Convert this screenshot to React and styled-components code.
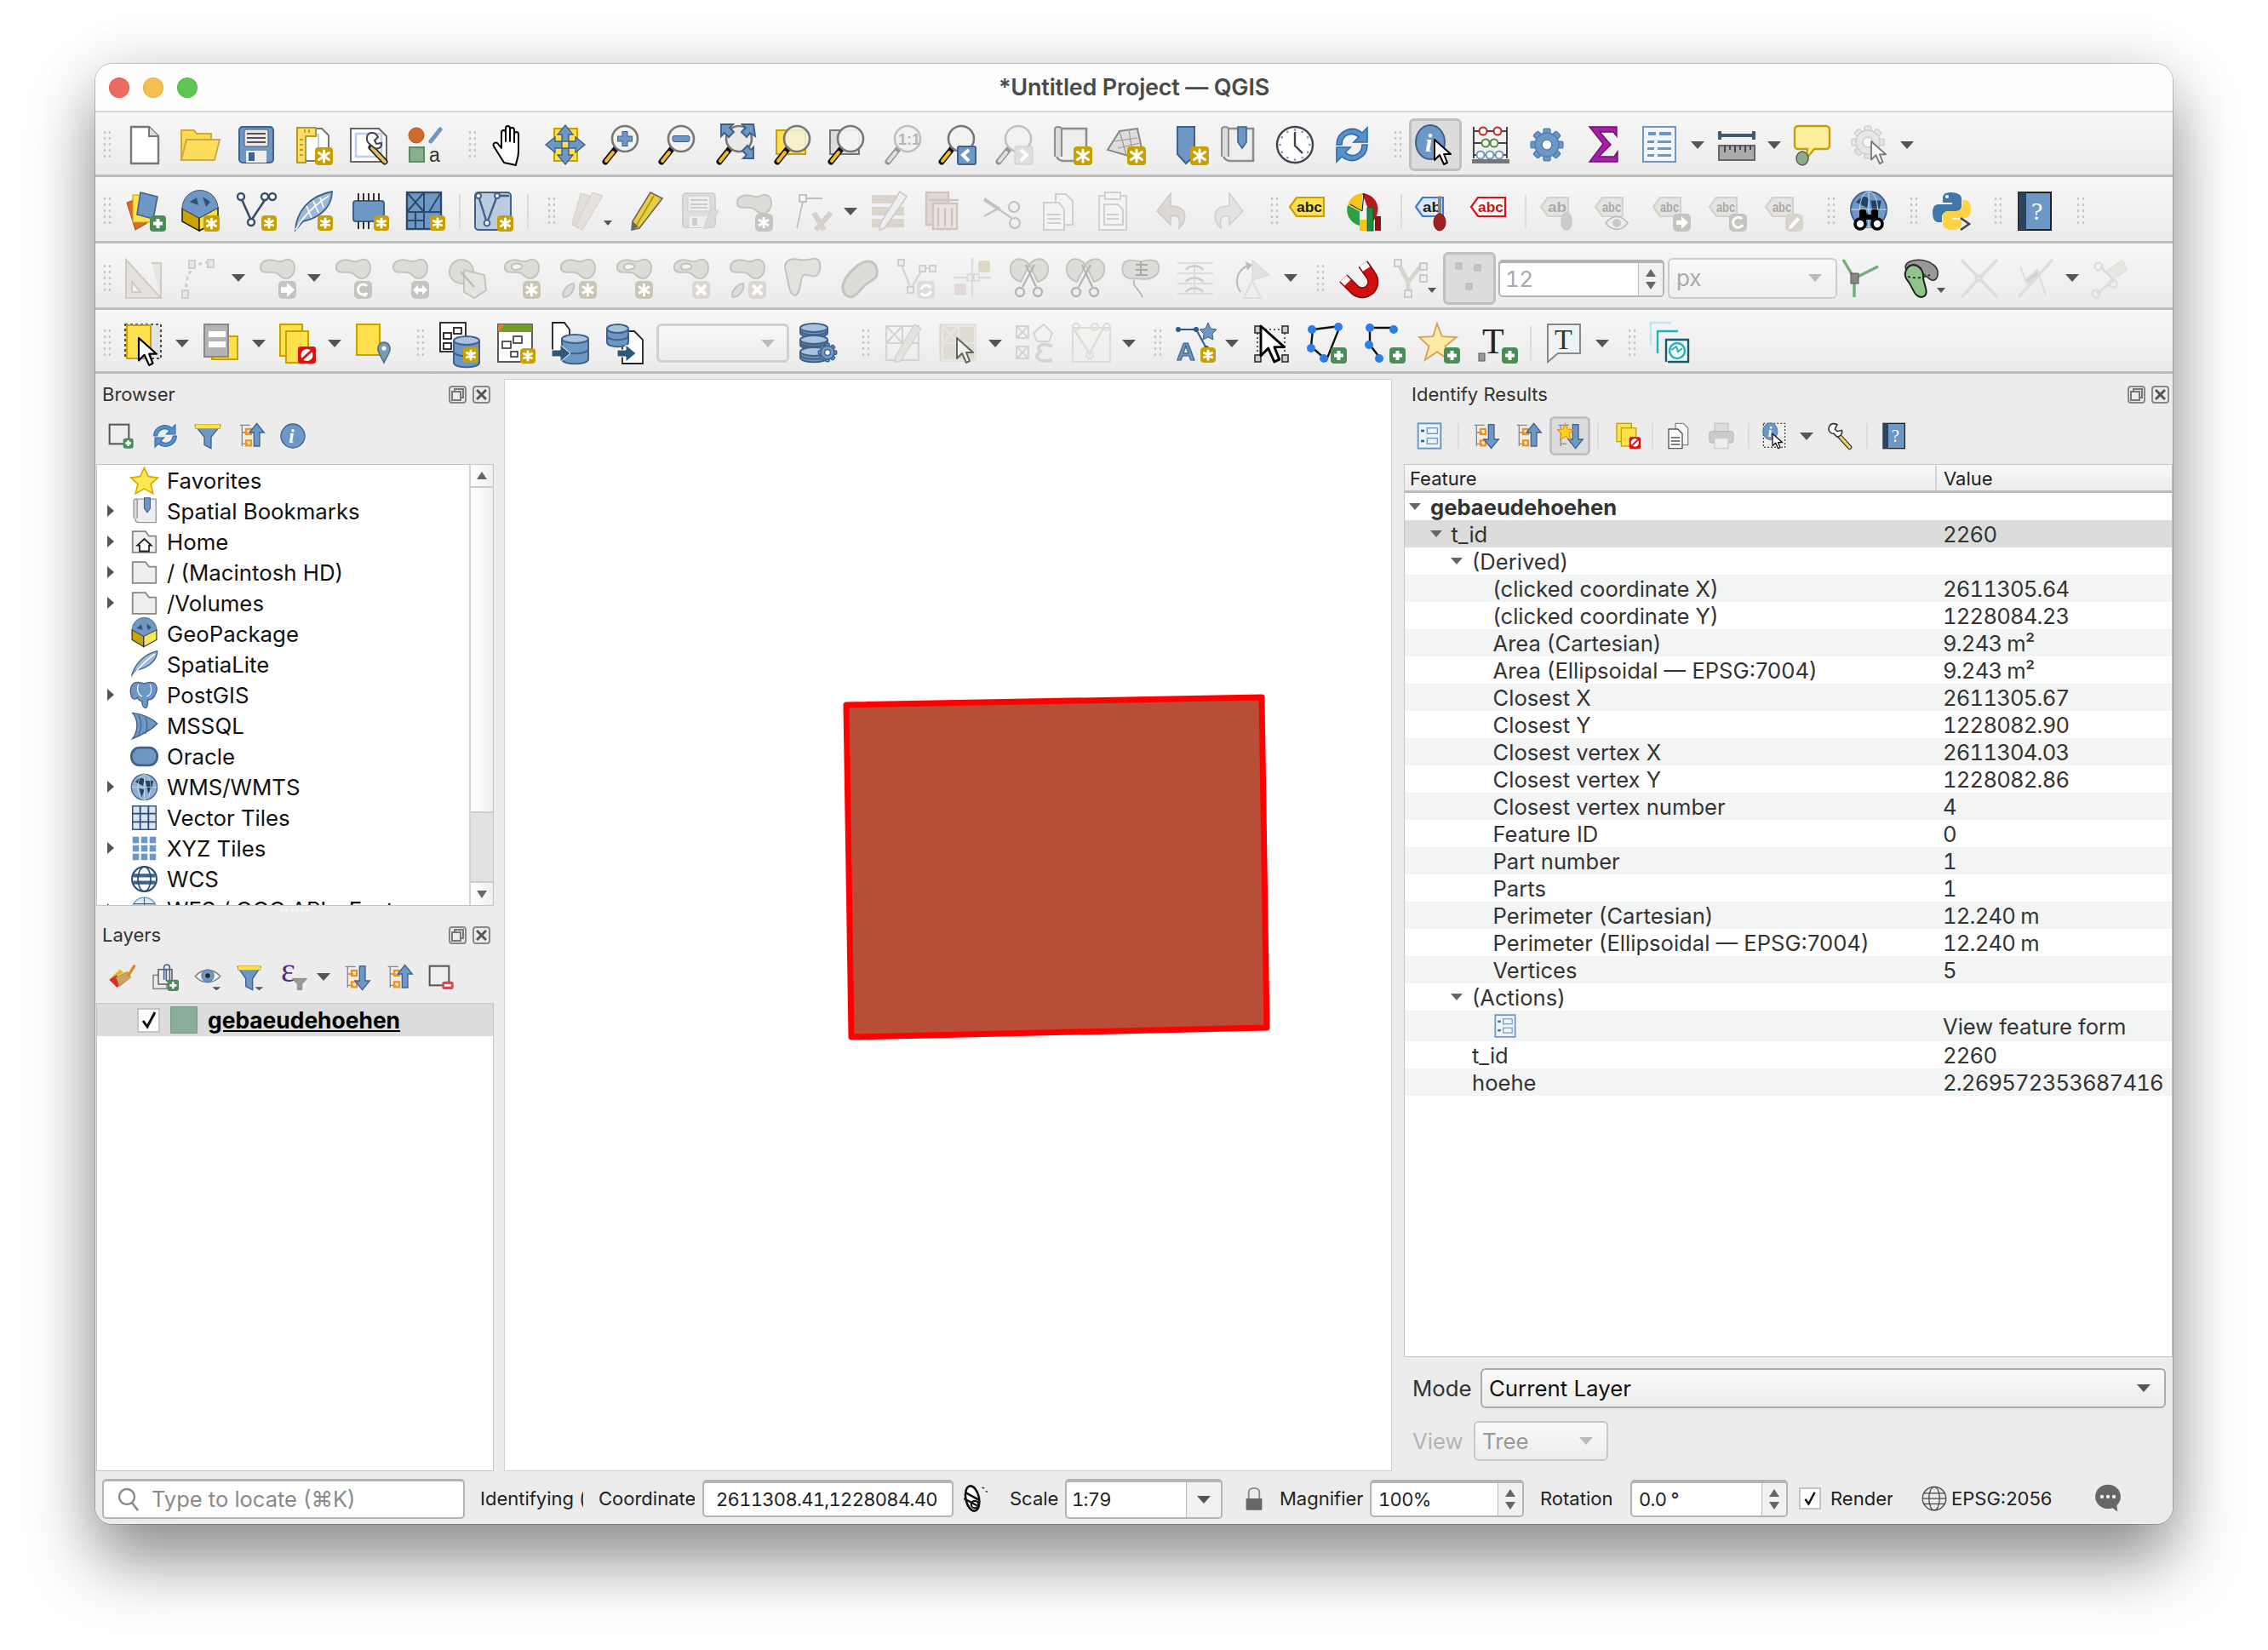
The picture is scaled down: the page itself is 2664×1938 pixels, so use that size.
import React from "react";
import styled, { createGlobalStyle } from "styled-components";

const FONT = `Inter, "Liberation Sans", sans-serif`;
const B = "#6d97c4";
const BD = "#41618a";
const Y = "#ffe14d";
const YD = "#c8a000";
const G1 = "#dcdcd8";
const G2 = "#c4c4c0";

const GlobalStyle = createGlobalStyle`
  html, body { margin: 0; padding: 0; background: #fff; }
  * { box-sizing: border-box; }
`;

/* ---------- icon parts ---------- */
const Ast = ({ x = 29, y = 29, s = 19, c = YD }) => (
  <g transform={`translate(${x} ${y})`}>
    <rect width={s} height={s} rx="4" fill={c} />
    <g stroke="#fff" strokeWidth="3" strokeLinecap="round">
      <path d={`M${s / 2} 4V${s - 4}M4.5 6.5L${s - 4.5} ${s - 6.5}M${s - 4.5} 6.5L4.5 ${s - 6.5}`} />
    </g>
  </g>
);
const Plus = ({ x = 29, y = 29, s = 19 }) => (
  <g transform={`translate(${x} ${y})`}>
    <rect width={s} height={s} rx="4" fill="#4c8c57" />
    <path d={`M${s / 2} 4V${s - 4}M4 ${s / 2}H${s - 4}`} stroke="#fff" strokeWidth="4" />
  </g>
);
const Cur = ({ x, y, s = 1 }) => (
  <path transform={`translate(${x} ${y}) scale(${s})`} d="M0 0V24L6 18L11 29L15 27L11 17H19Z" fill="#fff" stroke="#000" strokeWidth="2" strokeLinejoin="round" />
);
const Mag = ({ fill = "#f2f2f0", dim }) => (
  <g opacity={dim ? 0.4 : 1}>
    <path d="M18 29L6 44" stroke="#111" strokeWidth="7" strokeLinecap="round" />
    <path d="M15 33L7 43" stroke={dim ? "#ccc" : "#f1b72e"} strokeWidth="4" strokeLinecap="round" />
    <circle cx="29" cy="17" r="15" fill={fill} stroke="#777" strokeWidth="2.6" />
  </g>
);
const Blob = ({ x = 3, y = 1, hole }) => (
  <g transform={`translate(${x} ${y})`}>
    <path d="M1 11C0 3 9 0 17 2c5 1 9 2 14-1 6-1 10 3 10 9 0 8-5 13-10 13-8 0-6-6-14-7C10 15 2 18 1 11Z" fill={G1} stroke={G2} strokeWidth="2" />
    {hole && <path d="M9 10C8 6 14 5 18 6c4 1 5 5 0 6-4 1-8 2-9-2Z" fill="#f3f3f3" stroke={G2} strokeWidth="2" />}
  </g>
);
const GBadge = ({ children, c = G2 }) => (
  <g transform="translate(25 27)">
    <rect width="21" height="21" rx="5" fill={c} />
    {children}
  </g>
);
const Scissor = ({ c = "#b9b4b4" }) => (
  <g fill="none" stroke={c} strokeWidth="2.4">
    <path d="M30 8L16 34M20 8L32 34" />
    <circle cx="13" cy="40" r="5" />
    <circle cx="34" cy="40" r="5" />
  </g>
);
const Folder = () => (
  <path d="M4 42V6h22l6 8h12v28z" fill="#eee" stroke="#888" strokeWidth="2.6" />
);
const FourArrows = () => (
  <g fill={B} stroke={BD} strokeWidth="1.4">
    <path d="M24 1l9 11h-5v8h-8v-8h-5z" />
    <path d="M24 47l9-11h-5v-8h-8v8h-5z" />
    <path d="M1 24l11-9v5h8v8h-8v5z" />
    <path d="M47 24l-11-9v5h-8v8h8v5z" />
  </g>
);
const Tooth = ({ cx, cy, r, c, k }) => (
  <g fill={c} stroke={k} strokeWidth="1.4">
    {[0, 45, 90, 135, 180, 225, 270, 315].map((a) => (
      <rect key={a} x={cx - r * 0.28} y={cy - r * 1.35} width={r * 0.56} height={r * 0.8} rx="1.5" transform={`rotate(${a} ${cx} ${cy})`} />
    ))}
    <circle cx={cx} cy={cy} r={r} />
    <circle cx={cx} cy={cy} r={r * 0.42} fill="#fff" />
  </g>
);
const Tag = ({ c = "#ffdf4d", k = YD, t = "abc", tc = "#222", w = 38 }) => (
  <g>
    <path d={`M2 19L10 8H${w + 4}V30H10Z`} fill={c} stroke={k} strokeWidth="2.2" />
    <text x="10" y="25" fontFamily="Liberation Sans" fontWeight="700" fontSize="17" fill={tc} textLength={w - 8} lengthAdjust="spacingAndGlyphs">{t}</text>
  </g>
);
const Globe = ({ cx = 24, cy = 24, r = 22, c = B }) => (
  <g>
    <circle cx={cx} cy={cy} r={r} fill={c} stroke={BD} strokeWidth="2" />
    <path d={`M${cx - r * 0.7} ${cy - r * 0.4}q${r * 0.4} ${-r * 0.5} ${r * 0.7} ${-r * 0.2}l${-r * 0.1} ${r * 0.5}z M${cx + r * 0.1} ${cy - r * 0.5}h${r * 0.6}l${-r * 0.1} ${r * 0.5}l${-r * 0.3} ${r * 0.5}z M${cx - r * 0.4} ${cy + r * 0.1}l${r * 0.4} ${r * 0.1}l${-r * 0.2} ${r * 0.6}z`} fill="#26405f" />
    <path d={`M${cx - r} ${cy}H${cx + r}M${cx} ${cy - r}V${cy + r}`} stroke="#cfe0f2" strokeWidth="1" />
    <ellipse cx={cx} cy={cy} rx={r * 0.5} ry={r} fill="none" stroke="#cfe0f2" strokeWidth="1" />
  </g>
);
const DBCyl = ({ x, y, w = 30, h = 36, c = B }) => (
  <g fill={c} stroke={BD} strokeWidth="2">
    <path d={`M${x} ${y + 5}V${y + h - 5}c0 7 ${w} 7 ${w} 0V${y + 5}`} />
    <ellipse cx={x + w / 2} cy={y + 5} rx={w / 2} ry="5" fill="#a8c3e0" />
    <path d={`M${x} ${y + h / 2}c0 7 ${w} 7 ${w} 0`} fill="none" />
  </g>
);
const FArrow = ({ x, y, c = "#31577b" }) => (
  <path transform={`translate(${x} ${y})`} d="M0 6H10V0L22 10L10 20V14H0Z" fill={c} stroke="#fff" strokeWidth="1" />
);
const GridBox = ({ c = "#bbb" }) => (
  <g fill="none" stroke={c} strokeWidth="2.2">
    <rect x="5" y="4" width="38" height="40" />
    <path d="M5 24H43M24 4V44M5 4L24 24M24 4L5 24" />
  </g>
);
const MiniDrop = () => <path d="M32 41H47L39.500 47Z" fill="#555" />;

/* ---------- icons, all drawn in a 48 box ---------- */
const ICONS = {
  new: <><path d="M8 3h21l11 11v32H8z" fill="#fff" stroke="#777" strokeWidth="2.4" /><path d="M29 3v11h11" fill="#ddd" stroke="#777" strokeWidth="2" /></>,
  open: <><path d="M2 42V7h15l3 4h17v8" fill="#ffd94f" stroke="#c9a94a" strokeWidth="2" /><path d="M2 42l6-24h39l-6 24z" fill="#ffdd5c" stroke="#c9a94a" strokeWidth="2" /></>,
  save: <><rect x="4" y="3" width="40" height="42" rx="4" fill={B} stroke={BD} strokeWidth="2" /><rect x="10" y="6" width="28" height="20" rx="2" fill="#e8e8e8" stroke="#555" /><path d="M13 11H35M13 16H35M13 21H35" stroke="#555" strokeWidth="2" /><rect x="12" y="31" width="24" height="14" fill="#eee" /><rect x="15" y="33" width="7" height="10" fill={BD} /></>,
  layout: <><path d="M6 5h28l8 8v30H6z" fill="#fff" stroke="#777" strokeWidth="2" /><path d="M12 12H30V28" fill="none" stroke="#bcd0ee" strokeWidth="2" /><path d="M5 4h22v10H15v31H5z" fill="#ffdd66" stroke="#b89a20" strokeWidth="2" /><path d="M8 18h4M8 24h4M8 30h4M8 36h4M14 6v4M19 6v4" stroke="#a38a20" strokeWidth="1.4" /><Ast x="26" y="27" s="21" /></>,
  layoutmgr: <><path d="M2 5h33l9 9v30H2z" fill="#fff" stroke="#666" strokeWidth="2" /><rect x="8" y="11" width="30" height="27" fill="none" stroke="#bcd0ee" strokeWidth="2.6" /><path d="M26 27L42 44" stroke="#222" strokeWidth="7" strokeLinecap="round" /><path d="M27 28L42 44" stroke="#e2c45a" strokeWidth="4" strokeLinecap="round" /><path d="M27 10c-7 0-8 9-3 13l6 5c5 2 9-2 8-6l-6 1-2-4 4-4c-2-4-4-5-7-5z" fill="#fff" stroke="#444" strokeWidth="2" /></>,
  style: <><circle cx="14" cy="13" r="9" fill="#cf6a2f" stroke="#b2551e" /><path d="M31 20L42 6" stroke={B} strokeWidth="5" strokeLinecap="round" /><rect x="6" y="27" width="17" height="17" fill="#8bae8f" stroke="#5d8a64" strokeWidth="2" /><text x="29" y="44" fontFamily="Liberation Sans" fontSize="23" fill="#333">a</text></>,
  hand: <path d="M17 45C12 37 7 29 5 26c-2-4 3-6 5-3l4 5V10c0-4 5-4 5 0v10-15c0-4 5-4 5 0v15-13c0-4 5-4 5 0v14-9c0-4 5-4 5 0v20c0 8-3 12-3 16z" fill="#fff" stroke="#000" strokeWidth="2" strokeLinejoin="round" />,
  pan: <><rect x="11" y="5" width="27" height="38" fill={Y} stroke={YD} strokeWidth="2" /><FourArrows /></>,
  zoomin: <><Mag /><path d="M29 8V26M20 17H38" stroke={BD} strokeWidth="7" /><path d="M29 9V25M21 17H37" stroke={B} strokeWidth="5" /></>,
  zoomout: <><Mag /><rect x="19" y="13.5" width="20" height="7" rx="2" fill={B} stroke={BD} /></>,
  zoomfull: <><Mag fill="#e9e9e9" /><g fill={B} stroke={BD} strokeWidth="2"><path d="M8 0h14l-4 4 5 5-6 6-5-5-4 4z" /><path d="M46 0H33l4 4-5 5 6 6 4-5 6 4z" /><path d="M46 40H34l4-4-5-5 6-6 4 5 3-3z" /></g></>,
  zoomsel: <><rect x="5" y="7" width="34" height="28" fill={Y} stroke={YD} strokeWidth="2" /><Mag fill="rgba(245,245,235,.8)" /></>,
  zoomlayer: <><rect x="5" y="7" width="34" height="28" fill="#ddd" stroke="#777" strokeWidth="2" /><Mag fill="rgba(245,245,245,.9)" /></>,
  zoom11: <><Mag dim /><text x="18" y="24" fontFamily="Liberation Sans" fontWeight="700" fontSize="18" fill="#b5b5b5">1:1</text></>,
  zoomlast: <><Mag /><rect x="25" y="26" width="21" height="21" rx="2" fill={B} stroke={BD} strokeWidth="2" /><path d="M38 30L31 36L38 43" fill="none" stroke="#fff" strokeWidth="4" /></>,
  zoomnext: <><Mag dim /><rect x="25" y="26" width="21" height="21" rx="2" fill="#dde0e2" stroke="#ccc" /><path d="M32 30L39 36L32 43" fill="none" stroke="#fff" strokeWidth="4" /></>,
  newmap: <><path d="M8 5h32v38H12c-8-2-8-8-4-8z" fill="#eee" stroke="#8e8e8e" strokeWidth="2.6" /><path d="M3 38V6c0-4 8-4 8 0v32" fill="#ddd" stroke="#8e8e8e" strokeWidth="2" /><Ast x="25" y="26" s="22" /></>,
  new3d: <><path d="M2 30L16 8 37 5 42 28 26 37z" fill="#ddd" stroke="#888" strokeWidth="2" /><path d="M9 20l28-4M14 28l26-6M16 8l8 28M27 6l4 28" stroke="#999" strokeWidth="1.2" /><Ast x="25" y="26" s="22" /></>,
  newbm: <><path d="M10 3h20v34l-10 9-10-11z" fill={B} stroke={BD} strokeWidth="2" /><Ast x="25" y="26" s="22" /></>,
  showbm: <><path d="M8 5h32v38H12c-8-2-8-8-4-8z" fill="#eee" stroke="#8e8e8e" strokeWidth="2.6" /><path d="M3 38V6c0-4 8-4 8 0v32" fill="#ddd" stroke="#8e8e8e" strokeWidth="2" /><path d="M22 3h10v18l-5 7-5-7z" fill={B} stroke={BD} strokeWidth="1.6" /></>,
  clock: <><circle cx="24" cy="24" r="21" fill="#fff" stroke="#444" strokeWidth="2.4" /><path d="M24 9V25L33 34" fill="none" stroke="#444" strokeWidth="2.4" /><g fill={B}>{[0, 30, 60, 90, 120, 150, 180, 210, 240, 270, 300, 330].map((a) => <circle key={a} cx="24" cy="6.5" r="1.3" transform={`rotate(${a} 24 24)`} />)}</g></>,
  refresh: <><path d="M6 24C6 8 24 0 36 10l6-6v17H26l6-6C24 8 12 12 12 24z" fill="#5a90c8" stroke="#2e6aa8" strokeWidth="1.6" /><path d="M42 24c0 16-18 24-30 14l-6 6V27h16l-6 6c8 7 20 3 20-9z" fill="#5a90c8" stroke="#2e6aa8" strokeWidth="1.6" /></>,
  identify: <><ellipse cx="18" cy="21" rx="17" ry="20" fill={B} stroke={BD} strokeWidth="2" /><text x="12" y="32" fontFamily="Liberation Serif" fontStyle="italic" fontWeight="700" fontSize="30" fill="#fff">i</text><Cur x="23" y="18" s="1" /></>,
  abacus: <><path d="M4 3V40M43 3V40M3 8H44M3 22H44M3 36H44" stroke="#444" strokeWidth="2" /><g fill="#fff" strokeWidth="2"><g stroke="#c22"><circle cx="15" cy="8" r="4.5" /><circle cx="32" cy="8" r="4.5" /></g><g stroke="#4c8c3a"><circle cx="18" cy="22" r="4.5" /><circle cx="28" cy="22" r="4.5" /></g><g stroke={B}><circle cx="12" cy="36" r="4.5" /><circle cx="23" cy="36" r="4.5" /><circle cx="34" cy="36" r="4.5" /></g></g><rect x="2" y="41" width="44" height="5" fill="#777" /></>,
  gear: <Tooth cx={24} cy={24} r={14} c={B} k="#4d7db3" />,
  sigma: <path d="M7 3h32v11l-4-5H19l13 15-14 14h18l4-6v12H7l16-21z" fill="#a61fa6" stroke="#701070" strokeWidth="1.4" />,
  table: <><rect x="5" y="3" width="38" height="41" fill="#f2f6fb" stroke={B} strokeWidth="2" /><path d="M11 9h9v4h-9zM24 9h14v4H24zM10 19h8v3h-8zM22 19h16v3H22zM10 27h8v3h-8zM22 27h16v3H22zM10 35h8v3h-8zM22 35h16v3H22z" fill={B} /></>,
  measure: <><path d="M4 8V18M44 8V18M4 13H44" stroke="#415a75" strokeWidth="4" /><rect x="3" y="25" width="42" height="17" fill="#aaa" stroke="#666" strokeWidth="2" /><path d="M10 25v8M16 25v5M22 25v8M28 25v5M34 25v8M40 25v5" stroke="#333" strokeWidth="1.6" /></>,
  tip: <><path d="M6 2H39a4 4 0 0 1 4 4V25a4 4 0 0 1-4 4H25L16 40l1-11H6a4 4 0 0 1-4-4V6a4 4 0 0 1 4-4Z" fill="#fdef9c" stroke={YD} strokeWidth="2.4" /><ellipse cx="11" cy="40" rx="7" ry="8" fill="#8bae8f" stroke="#555" strokeWidth="1.4" /></>,
  action: <g opacity=".5"><Tooth cx={22} cy={21} r={14} c="#ddd" k="#aaa" /><Cur x="26" y="20" s=".9" /></g>,

  addlayer: <><path d="M2 14L18 8l8 30-14 8z" fill="#d96a2a" stroke="#a94f1b" /><rect x="9" y="5" width="22" height="32" fill={Y} stroke={YD} /><path d="M18 2L38 7 33 33 14 28z" fill={B} stroke={BD} strokeWidth="1.6" /><Plus x="29" y="29" /></>,
  gpkg: <><path d="M3 21L23 32V47L3 36z" fill="#c8a400" stroke="#111" strokeWidth="1.4" /><path d="M23 32L45 20V36L23 47z" fill="#f3e04b" stroke="#111" strokeWidth="1.4" /><path d="M3 21A21 21 0 0 1 45 20L23 32z" fill="#6d97c4" stroke="#556" /><path d="M12 13l8-5 2 9zM27 7l9 6-5 6z" fill="#33506e" /><Ast x="28" y="29" /></>,
  vertex: <><path d="M6 8L18 35L36 8" fill="none" stroke="#344f6e" strokeWidth="2.6" /><path d="M36 8H44" stroke="#344f6e" strokeWidth="2" /><g fill="#fff" stroke="#344f6e" strokeWidth="2.4"><circle cx="6" cy="7" r="4" /><circle cx="18" cy="37" r="4" /><circle cx="34" cy="7" r="4" /><circle cx="43" cy="7" r="4" /></g><Ast x="30" y="29" s="18" /></>,
  feather: <><path d="M3 46C4 26 18 6 46 1 46 14 38 30 12 36z" fill="#9db9d8" stroke={BD} strokeWidth="1.8" /><path d="M3 46C12 30 24 18 42 6M16 18l6 14M24 12l6 14M32 8l4 12" stroke="#fff" strokeWidth="1.6" fill="none" /><Ast x="29" y="29" s="18" /></>,
  chip: <><rect x="5" y="12" width="36" height="24" rx="3" fill={B} stroke={BD} strokeWidth="2" /><path d="M11 3v9M17 3v9M23 3v9M29 3v9M35 3v9M11 36v9M17 36v9M23 36v9" stroke="#333" strokeWidth="2" /><Ast x="29" y="29" s="18" /></>,
  virtual: <><rect x="2" y="2" width="40" height="43" fill="#6d97c4" stroke="#2c4a6b" strokeWidth="2.4" /><path d="M2 25H42M22 2V45M2 35H22M12 25V45M2 2L22 25M22 2L2 25M42 2L28 25" stroke="#2c4a6b" strokeWidth="2" fill="none" /><Ast x="29" y="29" s="18" /></>,
  mesh: <><rect x="2" y="2" width="42" height="44" rx="4" fill="#b9cce0" stroke="#41618a" strokeWidth="2" /><path d="M6 6L16 38L28 6L42 6" fill="none" stroke="#41618a" strokeWidth="2.4" /><g fill="#fff" stroke="#41618a" strokeWidth="2"><circle cx="16" cy="38" r="3.4" /><circle cx="28" cy="6" r="3" /><circle cx="6" cy="6" r="3" /></g><Ast x="28" y="29" /></>,
  pencils: <g opacity=".9"><path d="M14 3L26 6 12 44 4 40z" fill="#e0dbd6" stroke="#cfcbc6" /><path d="M28 2L40 6 16 46l-8-5z" fill="#e4dfda" stroke="#cfcbc6" /></g>,
  pencil: <><path d="M30 2L44 9 17 44 8 46 9 36z" fill="#e9cf3f" stroke="#666" strokeWidth="1.6" /><path d="M34 6L14 40" stroke="#a88f1a" strokeWidth="1.6" /><path d="M8 46l1-10 7 6z" fill="#666" /></>,
  savedim: <g opacity=".9"><rect x="4" y="3" width="38" height="40" rx="4" fill="#dcdcdc" stroke="#ccc" strokeWidth="2" /><rect x="10" y="6" width="26" height="18" fill="#eee" stroke="#c8c8c8" /><path d="M13 11H33M13 16H33M13 20H33" stroke="#c8c8c8" strokeWidth="2" /><rect x="12" y="30" width="22" height="13" fill="#eee" /><rect x="15" y="32" width="6" height="9" fill="#ccc" /><path d="M38 20L46 24 34 44H28z" fill="#ddd8d2" stroke="#ccc" /></g>,
  addfeat: <><Blob x="3" y="4" /><GBadge>{<path d="M10 4V17M4 7L16 14M16 7L4 14" stroke="#fff" strokeWidth="3" />}</GBadge></>,
  vtool: <g stroke="#c3c0bc" fill="none" strokeWidth="1.8"><rect x="7" y="5" width="8" height="8" /><path d="M15 9H34M11 13L4 44" /><path d="M26 46L44 26M24 26L36 46" strokeWidth="6" stroke="#d4d0cb" /></g>,
  editdim: <g><rect x="3" y="5" width="38" height="10" fill="#d9d4cc" /><rect x="3" y="19" width="38" height="10" fill="#d9d4cc" /><rect x="3" y="33" width="38" height="10" fill="#d9d4cc" /><path d="M36 1l8 6L18 44l-6 2 1-7z" fill="#eee" stroke="#ccc" strokeWidth="1.6" /></g>,
  trashdim: <g fill="none" stroke="#d0c4c0" strokeWidth="2.4"><rect x="2" y="2" width="26" height="38" fill="#dfd8d4" /><rect x="10" y="15" width="28" height="30" fill="#e9e4e0" /><path d="M5 11H40M16 20V42M24 20V42M32 20V42" /></g>,
  scissors: <g fill="none" stroke="#c4c0bc" strokeWidth="2.2"><path d="M2 10L34 32M2 30L20 20" /><path d="M2 10l18 12" strokeWidth="4" /><circle cx="37" cy="19" r="6" /><circle cx="38" cy="38" r="6" /></g>,
  copydim: <g fill="#f3f3f3" stroke="#d2d0cc" strokeWidth="2"><path d="M20 4h12l8 8v28H20z" /><path d="M6 14h18l6 8v24H6z" /><path d="M10 28h16M10 33h16M10 38h16" /></g>,
  pastedim: <g fill="#f3f3f3" stroke="#d2d0cc" strokeWidth="2"><rect x="5" y="6" width="32" height="40" /><rect x="12" y="2" width="18" height="8" /><path d="M11 16h16l6 6v18H11z" /><path d="M14 28h14M14 33h14" /></g>,
  undo: <path d="M18 3L2 24l16 16V30c8-2 12 0 10 14 9-8 12-26-10-26z" fill="#dcd9d5" stroke="#cfcbc6" strokeWidth="1.6" transform="translate(4 0)" />,
  redo: <path d="M26 3l16 21-16 16V30c-8-2-12 0-10 14-9-8-12-26 10-26z" fill="#e2e4e2" stroke="#cfd1cf" strokeWidth="1.6" />,
  abc: <Tag />,
  diagram: <><path d="M20 3a19 19 0 0 1 8 36V24z" fill="#b31a1a" /><path d="M20 3a19 19 0 0 0-17 14L20 24z" fill="#f5c518" /><path d="M3 17a19 19 0 0 0 14 24V24z" fill="#2f9e44" /><path d="M22 3 20 24 6 16" fill="none" stroke="#111" /><rect x="17" y="34" width="8" height="13" fill="#f5c518" /><rect x="26" y="20" width="7" height="27" fill="#1b8a4a" stroke="#0c5a2a" /><rect x="35" y="30" width="7" height="17" fill="#8a1111" /></>,
  abpin: <><Tag c="#d9e8fa" k="#3b7bd0" t="ab" w={30} /><path d="M30 8V28" stroke="#888" strokeWidth="4" strokeLinecap="round" /><ellipse cx="36" cy="37" rx="7" ry="10" transform="translate(-6 0)" fill="#a32020" stroke="#7a1414" /></>,
  abcred: <Tag c="#fff" k="#e01010" tc="#d01010" />,
  abpindim: <><Tag c="#e6e4e0" k="#d4d2ce" t="ab" tc="#aaa" w={30} /><ellipse cx="32" cy="36" rx="7" ry="11" fill="#cfc9c9" /></>,
  abceye: <><Tag c="#e6e4e0" k="#d4d2ce" tc="#aaa" w={30} /><path d="M14 38c8-10 18-10 26 0-8 10-18 10-26 0z" fill="#eee" stroke="#bbb" strokeWidth="1.6" /><circle cx="27" cy="38" r="5" fill="#c8c8c8" /></>,
  abcarrow: <><Tag c="#e6e4e0" k="#d4d2ce" tc="#aaa" w={30} /><GBadge><path d="M4 8H10V3L18 10.5 10 18V13H4Z" fill="#fff" /></GBadge></>,
  abcrot: <><Tag c="#e6e4e0" k="#d4d2ce" tc="#aaa" w={30} /><GBadge><path d="M15 6A6 6 0 1 0 16 13" fill="none" stroke="#fff" strokeWidth="3" /></GBadge></>,
  abcpen: <><Tag c="#e6e4e0" k="#d4d2ce" tc="#aaa" w={30} /><GBadge c="#d8d4cc"><path d="M14 4l3 3-9 10-4 1 1-4z" fill="#fff" /></GBadge></>,
  binoc: <><Globe cx={24} cy={22} r={21} /><g fill="#000"><rect x="13" y="22" width="8" height="16" rx="2" /><rect x="27" y="22" width="8" height="16" rx="2" /><rect x="20" y="28" width="8" height="6" /></g><g fill="#fff" stroke="#000" strokeWidth="3.6"><circle cx="14" cy="39" r="6" /><circle cx="34" cy="39" r="6" /></g></>,
  python: <><path d="M23 2c-9 0-10 4-10 7v5h11v2H8c-5 0-7 4-7 10s2 11 7 11h4v-6c0-4 4-7 8-7h9c4 0 6-3 6-6V9c0-4-5-7-12-7z" fill="#3f78a8" /><circle cx="18" cy="7" r="2" fill="#fff" /><path d="M24 46c9 0 11-4 11-7v-5H24v-2h15c5 0 7-4 7-10s-2-11-7-11h-3v6c0 4-4 7-8 7h-9c-4 0-6 3-6 6v9c0 4 5 7 11 7z" fill="#ffd343" /><path d="M34 32l10 7-10 7" fill="none" stroke="#444" strokeWidth="2.6" /></>,
  help: <><rect x="6" y="2" width="38" height="44" fill={B} stroke="#222" strokeWidth="2" /><rect x="6" y="2" width="9" height="44" fill="#2d425b" /><text x="21" y="34" fontFamily="Liberation Serif" fontSize="30" fill="#fff">?</text></>,

  ruler: <><path d="M3 2L44 47H3z" fill="#e4e0dc" stroke="#cfcbc6" strokeWidth="2" /><path d="M10 28l10 12H10z" fill="#f3f3f3" stroke="#cfcbc6" strokeWidth="2" /><path d="M33 6H44V46" fill="#e8e6e2" stroke="#cfcbc6" strokeWidth="2" /></>,
  curve: <><path d="M8 42C6 20 14 6 34 5" fill="none" stroke="#cfcfcb" strokeWidth="3" strokeDasharray="4 4" /><g fill="#e6e6e2" stroke="#cfcfcb" strokeWidth="2"><rect x="11" y="3" width="7" height="9" /><rect x="33" y="2" width="7" height="9" /><rect x="3" y="38" width="7" height="9" /></g></>,
  bmove: <><Blob /><GBadge><path d="M3 7H10V2L19 10.5 10 19V14H3Z" fill="#fff" /></GBadge></>,
  brot: <><Blob /><GBadge><path d="M15 6A6 6 0 1 0 15 14L12 18" fill="none" stroke="#fff" strokeWidth="3" /></GBadge></>,
  bflip: <><Blob /><GBadge><path d="M2 10.5l6-6v4h5v-4l6 6-6 6v-4H8v4z" fill="#fff" /></GBadge></>,
  boffset: <><circle cx="17" cy="16" r="14" fill={G1} stroke={G2} strokeWidth="2" /><path d="M20 14L44 20 46 38 32 47 20 40z" fill="#e4e4e0" stroke={G2} strokeWidth="2" /><path d="M16 16L32 34" stroke="#b9b9b5" strokeWidth="2" /></>,
  bring: <><Blob hole /><GBadge c="#c9c6b8"><path d="M10.5 3V18M4 6.5L17 14.5M17 6.5L4 14.5" stroke="#fff" strokeWidth="3" /></GBadge></>,
  bpart: <><Blob /><path d="M7 46c-4-6 6-16 12-16 2 6-4 16-12 16z" fill={G1} stroke={G2} strokeWidth="2" /><GBadge c="#c9c6b8"><path d="M10.5 3V18M4 6.5L17 14.5M17 6.5L4 14.5" stroke="#fff" strokeWidth="3" /></GBadge></>,
  bdelring: <><Blob hole /><GBadge c="#dcd6d4"><path d="M5 5L16 16M16 5L5 16" stroke="#fff" strokeWidth="4" /></GBadge></>,
  bdelpart: <><Blob /><path d="M7 46c-4-6 6-16 12-16 2 6-4 16-12 16z" fill={G1} stroke={G2} strokeWidth="2" /><GBadge c="#dcd6d4"><path d="M5 5L16 16M16 5L5 16" stroke="#fff" strokeWidth="4" /></GBadge></>,
  reshape: <path d="M3 12C2 2 12 0 20 2c8 2 14-2 20-1 7 3 5 17-1 20-7 2-10-3-14-1-5 3-2 20-10 24-8 0-8-20-12-32z" fill="#e1e1dd" stroke={G2} strokeWidth="2" />,
  offcurve: <path d="M8 44C-2 34 8 20 18 12 30 0 42 2 44 14c2 12-8 12-14 18C22 40 16 50 8 44z" fill={G1} stroke={G2} strokeWidth="3" />,
  swapv: <><path d="M6 6L18 36L32 12H44" fill="none" stroke="#d4d4d0" strokeWidth="2.2" /><g fill="#eee" stroke="#ccc" strokeWidth="1.8"><rect x="3" y="2" width="7" height="7" /><rect x="14" y="34" width="7" height="7" /><rect x="28" y="9" width="7" height="7" /><rect x="40" y="9" width="7" height="7" /></g><GBadge c="#ddd"><path d="M5 10a6 6 0 0 1 11-2M16 12a6 6 0 0 1-11 2" fill="none" stroke="#fff" strokeWidth="3" /></GBadge></>,
  snapdim: <><path d="M24 0V46M2 23H46" stroke="#ddd" strokeWidth="2.6" /><rect x="18" y="19" width="6" height="8" fill="#eee" stroke="#ccc" /><rect x="26" y="19" width="6" height="8" fill="#eee" stroke="#ccc" /><rect x="31" y="3" width="14" height="14" rx="3" fill="#ddd8c8" /><rect x="3" y="30" width="14" height="14" rx="3" fill="#e0d8d8" /></>,
  splitA: <><path d="M8 2C-2 8 0 24 14 28L24 8C20 2 12 0 8 2zM40 2c10 6 8 22-6 26L24 8c4-6 12-8 16-6z" fill={G1} stroke={G2} strokeWidth="2" /><Scissor /></>,
  stitch: <><path d="M4 6C-1 18 6 26 18 24 24 24 28 26 34 24 46 22 48 10 42 4 34 0 28 4 24 4 16 4 10 0 4 6z" fill={G1} stroke={G2} strokeWidth="2" /><path d="M24 4V20M18 8H32M18 14H32M18 20H32" stroke="#aaa" strokeWidth="2" /><path d="M16 26c-2 8 6 10 10 20" fill="none" stroke="#bbb" strokeWidth="2" /></>,
  align: <><g stroke="#ddd" strokeWidth="3" fill="none"><path d="M2 6H44M2 18H44M2 30H44M2 42H44M22 6V44" strokeWidth="2" /></g><path d="M12 14C16 8 28 8 32 14M12 28C16 22 28 22 32 28M12 40C16 34 28 34 32 40" fill="none" stroke="#ccc" strokeWidth="2.4" /></>,
  rotfeat: <><path d="M24 2L44 20 24 26z" fill="#e2e2de" stroke="#d5d5d0" /><path d="M24 26L34 47H14z" fill="#eee" stroke="#ddd" strokeWidth="2" /><path d="M10 40C2 28 6 14 20 8" fill="none" stroke="#bbb" strokeWidth="2" /><path d="M16 4L24 8 18 15z" fill="#bbb" /></>,
  magnet: <><path d="M31 7L40 20A12 12 0 0 1 20 36L8 24" fill="none" stroke="#7a0808" strokeWidth="13" /><path d="M31 7L40 20A12 12 0 0 1 20 36L8 24" fill="none" stroke="#d01010" strokeWidth="10" /><path d="M31 7L35 13M8 24L13 29" stroke="#fff" strokeWidth="10" /></>,
  snapv: <><path d="M6 6L18 28 18 44M18 28L34 8" fill="none" stroke="#d4d4d0" strokeWidth="5" /><g fill="#eee" stroke="#c8c8c4" strokeWidth="1.8"><rect x="2" y="2" width="8" height="8" /><rect x="14" y="38" width="8" height="8" /><rect x="32" y="6" width="8" height="8" /><rect x="32" y="20" width="8" height="8" /></g></>,
  snapbox: <g fill="#c4c4c4" stroke="#b4b4b4" strokeWidth="1"><rect x="8" y="6" width="7" height="7" /><rect x="30" y="8" width="7" height="7" /><rect x="20" y="30" width="7" height="7" /></g>,
  trimY: <><path d="M16 46V24L3 2M16 24L44 10" fill="none" stroke="#6cb07a" strokeWidth="3.4" /><rect x="12" y="18" width="9" height="12" fill="#888" stroke="#555" /></>,
  gshape: <><path d="M6 14C0 2 26-2 38 8 46 14 44 28 36 26 30 24 20 8 6 14z" fill="#999" stroke="#333" strokeWidth="1.6" /><path d="M6 14C12 2 28 10 26 24 28 34 34 44 24 46 16 46 14 36 10 30 8 26 2 22 6 14z" fill="#8fc58a" stroke="#222" strokeWidth="2" /><path d="M8 22C16 24 24 24 34 20" stroke="#333" strokeWidth="2" strokeDasharray="3 3" fill="none" /></>,
  xdim: <g fill="none" stroke="#ddd" strokeWidth="3.4"><path d="M4 2L46 46M46 2L4 46" /><circle cx="24" cy="24" r="3" fill="#eee" /></g>,
  x2dim: <><path d="M44 2L4 46" stroke="#ddd" strokeWidth="3.4" /><path d="M6 10L12 26 26 14 36 44 28 20 14 30z" fill="#d6d2cc" stroke="#ddd" strokeWidth="2" /></>,
  x3dim: <><path d="M38 2L44 14 26 26 18 16z" fill="#e8e6e0" stroke="#ddd" /><path d="M12 10L28 26M28 26L8 42" stroke="#ddd" strokeWidth="3" /><circle cx="10" cy="10" r="4.5" fill="none" stroke="#ddd" strokeWidth="2.4" /><circle cx="27" cy="30" r="4.5" fill="none" stroke="#ddd" strokeWidth="2.4" /><circle cx="7" cy="42" r="4.5" fill="none" stroke="#ddd" strokeWidth="2.4" /></>,

  select: <><rect x="2" y="2" width="42" height="40" fill="#e3e3e3" stroke="#222" strokeWidth="1.6" strokeDasharray="3 3" /><rect x="4" y="3" width="28" height="39" fill={Y} stroke={YD} strokeWidth="2" /><Cur x="18" y="18" s="1.1" /></>,
  selattr: <><rect x="12" y="16" width="30" height="27" fill={Y} stroke={YD} strokeWidth="2" /><rect x="3" y="2" width="28" height="38" fill="#b4b4b4" stroke="#888" strokeWidth="2" /><rect x="8" y="10" width="20" height="7" fill="#fff" /><rect x="8" y="22" width="20" height="7" fill="#fff" /></>,
  desel: <><rect x="3" y="2" width="26" height="37" fill={Y} stroke={YD} strokeWidth="2" /><rect x="10" y="10" width="26" height="37" fill={Y} stroke={YD} strokeWidth="2" /><rect x="24" y="28" width="21" height="20" rx="3" fill="#d11" /><circle cx="34.5" cy="38" r="7" fill="#fff" /><path d="M29 43L40 33" stroke="#d11" strokeWidth="3" /></>,
  selloc: <><rect x="6" y="2" width="27" height="36" fill={Y} stroke={YD} strokeWidth="2" /><path d="M38 47C34 38 30 34 31 30a7 7 0 0 1 14 0c1 4-3 8-7 17z" fill="#7c9bb0" stroke="#4d6d84" strokeWidth="1.6" /><circle cx="38" cy="30" r="2.6" fill="#fff" /></>,
  attrdb: <><rect x="2" y="0" width="30" height="34" fill="#fff" stroke="#222" strokeWidth="1.8" /><g fill="#fff" stroke="#222" strokeWidth="1.8"><rect x="6" y="12" width="9" height="7" /><rect x="18" y="6" width="9" height="7" /><rect x="6" y="24" width="9" height="7" /></g><DBCyl x={18} y={16} /><Ast x="29" y="29" s="18" /></>,
  attrnew: <><rect x="4" y="2" width="40" height="44" fill="#fff" stroke="#333" strokeWidth="1.6" /><rect x="4" y="2" width="40" height="9" fill="#6e9e26" /><path d="M4 11L12 2H4z" fill="#f07a1c" /><g fill="#fff" stroke="#333" strokeWidth="1.6"><rect x="9" y="22" width="10" height="8" /><rect x="22" y="16" width="10" height="8" /><rect x="19" y="34" width="8" height="6" /></g><Ast x="30" y="30" s="18" /></>,
  dbin: <><path d="M4 0h14l6 8v30H4z" fill="#fff" stroke="#222" strokeWidth="1.8" /><DBCyl x={15} y={14} w={31} h={34} /><FArrow x="3" y="26" /></>,
  dbout: <><path d="M20 10h14l10 10v28H20z" fill="#fff" stroke="#222" strokeWidth="1.8" /><DBCyl x={2} y={2} w={25} h={26} /><FArrow x="14" y="26" /></>,
  dbgear: <><g><DBCyl x={3} y={1} w={32} h={16} /><DBCyl x={3} y={15} w={32} h={16} c="#777" /><DBCyl x={3} y={29} w={32} h={17} /></g><Tooth cx={35} cy={35} r={8} c={B} k={BD} /></>,
  griddim: <><GridBox c="#d4d4d0" /><path d="M38 2l8 5-24 38-7 2 1-8z" fill="#e4e2de" stroke="#ccc" /></>,
  gridcur: <><rect x="2" y="2" width="42" height="43" fill="#dfdcd2" stroke="#d8d6cc" /><GridBox c="#e6e6e2" /><g opacity=".55"><Cur x="22" y="18" s="1" /></g></>,
  eps: <><g fill="none" stroke="#d4d4d0" strokeWidth="2"><rect x="2" y="4" width="14" height="14" /><rect x="2" y="28" width="14" height="14" /><path d="M2 4l14 14M16 4L2 18M2 28l14 14M16 28L2 42" /><path d="M22 12l12-10 10 10-4 10H26z" /></g><path d="M44 28C32 22 24 28 30 34 22 38 26 48 44 44" fill="none" stroke="#d4d4d0" strokeWidth="4" /></>,
  vdim: <g fill="none" stroke="#dedcd4" strokeWidth="2"><rect x="2" y="6" width="44" height="40" /><path d="M2 6L22 36 38 6" strokeWidth="2.6" /><circle cx="22" cy="38" r="4" /><circle cx="6" cy="5" r="4" /><circle cx="28" cy="5" r="4" /><circle cx="42" cy="5" r="4" /></g>,
  labelA: <><text x="1" y="44" fontFamily="Liberation Sans" fontWeight="700" fontSize="30" fill={B} stroke={BD} strokeWidth="1.2">A</text><path d="M2 8H24L36 30" fill="none" stroke="#2a5b8c" strokeWidth="2" /><g fill="#2a5b8c"><circle cx="3" cy="8" r="3" /><circle cx="24" cy="8" r="3" /><circle cx="36" cy="30" r="3" /></g><path d="M38 0l3 7 7 1-5 5 1 7-6-3-6 3 1-7-5-5 7-1z" fill={B} stroke={BD} /><Ast x="29" y="29" s="18" /></>,
  cursor: <><g fill="#ccc" stroke="#333" strokeWidth="1.6"><rect x="6" y="4" width="7" height="8" /><rect x="38" y="4" width="7" height="8" /><rect x="6" y="38" width="7" height="8" /><rect x="38" y="38" width="7" height="8" /></g><path d="M9 12V38M13 8H38M41 12V38" stroke="#333" strokeWidth="1.6" strokeDasharray="2 3" /><Cur x="13" y="4" s="1.45" /></>,
  polyadd: <><path d="M8 8L40 4 24 44 6 28Z" fill="none" stroke="#111" strokeWidth="2.4" /><g fill="#2e7ce8"><circle cx="7" cy="8" r="5" /><circle cx="38" cy="5" r="5" /><circle cx="6" cy="30" r="5" /><circle cx="21" cy="42" r="5" /></g><Plus x="29" y="29" /></>,
  lineadd: <><path d="M6 6H34M6 6L6 26 20 44" fill="none" stroke="#111" strokeWidth="2.4" /><g fill="#2e7ce8"><circle cx="6" cy="6" r="5" /><circle cx="34" cy="8" r="5" /><circle cx="5" cy="26" r="5" /><circle cx="17" cy="42" r="5" /></g><Plus x="29" y="29" /></>,
  staradd: <><path d="M20 1l6 16 18 1-14 11 5 17-15-10L5 46l5-17L-2 18l17-1z" fill="#fdeca5" stroke="#dca05a" strokeWidth="2" transform="translate(2 0) scale(.95)" /><Plus x="29" y="29" /></>,
  textadd: <><text x="6" y="36" fontFamily="Liberation Serif" fontSize="42" fill="#222">T</text><rect x="2" y="36" width="7" height="9" fill="#999" stroke="#555" /><Plus x="29" y="29" /></>,
  balloon: <><path d="M4 2H42V36H16L4 46z" fill="#eef3f8" stroke="#888" strokeWidth="2" /><text x="12" y="31" fontFamily="Liberation Serif" fontSize="34" fill="#333">T</text></>,
  tile: <><path d="M2 26V0H26" fill="none" stroke="#bfe4f2" strokeWidth="2.4" /><path d="M10 36V10H34" fill="none" stroke="#22b3b3" strokeWidth="2.4" /><path d="M22 46H46V20H20v26" fill="#f4fbfb" stroke="#175a6b" strokeWidth="2.4" /><circle cx="33" cy="33" r="9" fill="none" stroke="#22b3b3" strokeWidth="2.4" /><path d="M26 32l6-4 2 6 5-4" stroke="#22b3b3" strokeWidth="2" fill="none" /></>,

  /* tree and panel icons */
  star: <path d="M24 2l7 15 16 2-12 11 4 16-15-8-15 8 4-16L1 19l16-2z" fill="#ffe94e" stroke="#d6a800" strokeWidth="2.4" />,
  bmbook: <><path d="M10 3h34v40H16c-8 0-9-6-6-8z" fill="#eee" stroke="#9a9a9a" strokeWidth="2" /><path d="M6 36V6c0-4 6-4 6 0v30" fill="#ddd" stroke="#9a9a9a" strokeWidth="2" /><path d="M24 1h10v18l-5 7-5-7z" fill={B} stroke={BD} strokeWidth="1.6" /></>,
  home: <><Folder /><path d="M12 30L24 19 36 30H32V40H16V30Z" fill="#fff" stroke="#222" strokeWidth="2.6" /></>,
  folder: <Folder />,
  geopkg: <><path d="M3 17L23 28V46L3 34z" fill="#c8a400" stroke="#222" strokeWidth="1.6" /><path d="M23 28L45 17V34L23 46z" fill="#f5e65a" stroke="#222" strokeWidth="1.6" /><path d="M3 17A21 21 0 0 1 45 17L23 28z" fill={B} stroke="#556" /><path d="M11 14l8-6 2 9zM28 6l8 7-6 5z" fill="#33506e" /></>,
  slite: <><path d="M2 46C6 24 24 6 46 1 46 12 38 28 10 34z" fill="#9db9d8" stroke={BD} strokeWidth="2" /><path d="M2 46C14 30 24 18 42 6" stroke="#fff" strokeWidth="2" fill="none" /></>,
  pg: <><path d="M12 2C2 2-2 14 2 26c2 6 8 6 10 2 2 4 6 6 8 6 0 6 2 12 6 12s4-8 4-14c6 0 10-2 12-8 6-10 4-22-8-22-6 0-8 2-10 2S18 2 12 2z" fill={B} stroke={BD} strokeWidth="2" /><path d="M14 6c-4 8 0 18 6 20M34 6c4 8 2 18-6 20" fill="none" stroke="#fff" strokeWidth="1.6" /></>,
  mssql: <><path d="M4 2C18 4 36 10 46 20 38 30 18 40 4 46 14 32 14 14 4 2z" fill={B} stroke={BD} strokeWidth="2" /><path d="M14 6c6 10 6 22 0 34M26 10c4 10 4 18 0 28" fill="none" stroke={BD} strokeWidth="1.6" /></>,
  oracle: <rect x="2" y="9" width="44" height="30" rx="14" fill={B} stroke={BD} strokeWidth="4" />,
  wms: <Globe r={22} c="#8fb0d4" />,
  vector: <><rect x="4" y="4" width="40" height="40" fill="#d7e4f2" stroke="#2c4a6b" strokeWidth="2" /><path d="M4 17H44M4 31H44M17 4V44M31 4V44" stroke="#2c4a6b" strokeWidth="2.6" /></>,
  xyz: <g fill="#6d97c4">{[4, 18.5, 33].flatMap((x) => [4, 18.5, 33].map((y) => <rect key={`${x}-${y}`} x={x} y={y} width="11" height="11" />))}</g>,
  wcs: <><circle cx="24" cy="24" r="21" fill="#fff" stroke="#2c4a6b" strokeWidth="3" /><path d="M5 15H43V21H5zM5 27H43V33H5z" fill="#3c6491" /><ellipse cx="24" cy="24" rx="11" ry="21" fill="none" stroke="#2c4a6b" strokeWidth="2.4" /></>,
  wfs: <><circle cx="24" cy="24" r="21" fill="#dce8f4" stroke={B} strokeWidth="2" /><path d="M6 14H42M6 30H42M24 3V45" stroke={BD} strokeWidth="1.6" /></>,
  newgroup: <><rect x="4" y="4" width="34" height="34" fill="#eee" stroke="#555" strokeWidth="3" /><Plus x="28" y="28" s="18" /></>,
  refreshb: <><path d="M4 24C4 8 24 0 36 10l6-6v17H26l6-6C24 8 12 12 10 24z" fill="#5a90c8" stroke="#2e6aa8" strokeWidth="1.6" /><path d="M44 24c0 16-20 24-32 14l-6 6V27h16l-6 6c8 7 20 3 22-9z" fill="#5a90c8" stroke="#2e6aa8" strokeWidth="1.6" /></>,
  filter: <><path d="M2 6H46L30 26V46L18 40V26Z" fill={B} stroke={BD} strokeWidth="2" /><rect x="2" y="4" width="44" height="7" fill={Y} stroke={YD} /></>,
  filterd: <><path d="M2 6H42L28 26V46L16 40V26Z" fill={B} stroke={BD} strokeWidth="2" /><rect x="2" y="4" width="40" height="7" fill={Y} stroke={YD} /><MiniDrop /></>,
  collapse: <><path d="M4 5H22M8 5V42M8 18H18M8 38H18" stroke="#888" strokeWidth="2" fill="none" /><rect x="15" y="12" width="9" height="9" fill="none" stroke="#f09417" strokeWidth="3.4" /><rect x="15" y="32" width="9" height="9" fill="none" stroke="#f09417" strokeWidth="3.4" /><path d="M34 2L47 18H39V42H29V18H21Z" fill={B} stroke={BD} strokeWidth="2" /></>,
  expand: <><path d="M4 5H22M8 5V42M8 18H18M8 38H18" stroke="#888" strokeWidth="2" fill="none" /><rect x="15" y="12" width="9" height="9" fill="none" stroke="#f09417" strokeWidth="3.4" /><rect x="15" y="32" width="9" height="9" fill="none" stroke="#f09417" strokeWidth="3.4" /><path d="M34 46L47 30H39V4H29V30H21Z" fill={B} stroke={BD} strokeWidth="2" /></>,
  info: <><circle cx="24" cy="24" r="21" fill={B} stroke={BD} strokeWidth="2" /><text x="17" y="36" fontFamily="Liberation Serif" fontStyle="italic" fontWeight="700" fontSize="34" fill="#fff">i</text></>,
  brush: <><path d="M2 28L20 10 36 22 16 42z" fill={Y} stroke={YD} strokeWidth=".5" /><path d="M2 28L26 16l-4-6z" fill="#e0b030" /><path d="M2 28L16 42 26 30 14 20z" fill="#d83030" /><path d="M14 24L34 14l6 10-20 16z" fill="#c8a268" stroke="#a8834a" /><path d="M36 20L46 4" stroke="#d88a2a" strokeWidth="5" strokeLinecap="round" /></>,
  addgroup: <><rect x="3" y="20" width="24" height="24" fill="none" stroke="#888" strokeWidth="2.4" /><rect x="12" y="10" width="24" height="26" fill="#eee" stroke="#666" strokeWidth="2.4" /><path d="M22 28V6c0-6 10-6 10 0v22c0 3-6 3-6 0V10" fill="none" stroke={BD} strokeWidth="2.4" /><Plus x="28" y="28" s="20" /></>,
  eye: <><path d="M2 22C14 8 34 8 46 22 34 36 14 36 2 22z" fill="#f3f3f3" stroke="#888" strokeWidth="2.4" /><circle cx="24" cy="21" r="11" fill={B} stroke={BD} /><circle cx="24" cy="21" r="4" fill="#222" /><MiniDrop /></>,
  exprfilter: <><text x="0" y="32" fontFamily="Liberation Serif" fontSize="60" fill="#5c2d80">ε</text><path d="M20 26H46L37 36V46H29V36Z" fill="#999" stroke="#777" /></>,
  rmgroup: <><rect x="4" y="4" width="34" height="34" fill="#eee" stroke="#555" strokeWidth="3" /><rect x="26" y="31" width="20" height="14" rx="4" fill="#e8404a" /><rect x="30" y="36" width="12" height="4" fill="#fff" /></>,
  form: <><rect x="4" y="2" width="40" height="44" fill="#eef4fb" stroke={B} strokeWidth="3" /><g fill="none" stroke={B} strokeWidth="2"><rect x="20" y="10" width="18" height="10" /><rect x="20" y="28" width="18" height="10" /></g><rect x="9" y="13" width="6" height="4" fill={BD} /><rect x="9" y="31" width="6" height="4" fill={BD} /></>,
  autofeat: <><path d="M4 5H22M8 5V42M8 18H18M8 38H18" stroke="#888" strokeWidth="2" fill="none" /><path d="M34 46L47 30H39V4H29V30H21Z" fill={B} stroke={BD} strokeWidth="2" /><path d="M16 2l4 10 10 1-7 7 2 11-9-6-9 6 2-11-7-7 10-1z" fill="#ffd11a" stroke="#e08a1a" strokeWidth="1.6" /></>,
  deselsm: <><rect x="6" y="2" width="26" height="32" fill={Y} stroke={YD} strokeWidth="2" /><rect x="14" y="10" width="26" height="32" fill={Y} stroke={YD} strokeWidth="2" /><rect x="28" y="26" width="20" height="21" rx="3" fill="#d11" /><circle cx="38" cy="36" r="7" fill="#fff" /><path d="M33 41L43 31" stroke="#d11" strokeWidth="3" /></>,
  copydoc: <><path d="M18 2h14l8 8v30H18z" fill="#f5f5f5" stroke="#888" strokeWidth="2" /><path d="M6 12h16l8 8v26H6z" fill="#fff" stroke="#555" strokeWidth="2" /><path d="M10 27h16M10 33h16M10 39h16" stroke="#555" strokeWidth="2" /></>,
  print: <><rect x="12" y="2" width="24" height="16" fill="#ddd" stroke="#c4c4c4" strokeWidth="2" /><rect x="3" y="16" width="42" height="20" rx="5" fill="#c8ccd0" stroke="#bbb" strokeWidth="2" /><rect x="12" y="28" width="24" height="18" fill="#eee" stroke="#ccc" strokeWidth="2" /></>,
  idsel: <><rect x="2" y="2" width="38" height="42" fill="#eee" stroke="#222" strokeWidth="1.6" strokeDasharray="3 3" /><ellipse cx="14" cy="16" rx="13" ry="15" fill={B} stroke={BD} /><text x="10" y="26" fontFamily="Liberation Serif" fontStyle="italic" fontWeight="700" fontSize="24" fill="#fff">i</text><Cur x="18" y="20" s=".9" /></>,
  wrench: <><path d="M18 20L40 44" stroke="#222" strokeWidth="8" strokeLinecap="round" /><path d="M20 22L40 44" stroke="#e8cf6a" strokeWidth="5" strokeLinecap="round" /><path d="M6 4C0 12 4 20 12 20l6 6c6-2 10-6 8-12l-8 2-4-4 4-8C14 2 10 2 6 4z" fill="#fff" stroke="#333" strokeWidth="2.4" /></>,
  mouse: <><ellipse cx="20" cy="24" rx="11" ry="21" fill="#fff" stroke="#111" strokeWidth="3.6" transform="rotate(-12 20 24)" /><circle cx="24" cy="34" r="6" fill="none" stroke="#111" strokeWidth="3" /><path d="M8 14L30 26M6 24L28 36" stroke="#111" strokeWidth="3.6" /><path d="M36 6l4 1M42 12l3 1" stroke="#333" strokeWidth="2" /></>,
  lock: <><path d="M14 26V12c0-10 20-10 20 0v14" fill="none" stroke="#8a8a8a" strokeWidth="3" /><rect x="9" y="24" width="30" height="22" rx="2" fill="#666" /></>,
  crs: <><ellipse cx="24" cy="24" rx="22" ry="22" fill="none" stroke="#444" strokeWidth="2" /><ellipse cx="24" cy="24" rx="10" ry="22" fill="none" stroke="#444" strokeWidth="2" /><path d="M3 14H45M2 24H46M3 34H45" stroke="#444" strokeWidth="2" /></>,
  chat: <><ellipse cx="24" cy="21" rx="21" ry="20" fill="#666" /><path d="M26 36L40 46 38 30z" fill="#666" /><g fill="#fff"><circle cx="14" cy="21" r="3" /><circle cx="24" cy="21" r="3" /><circle cx="34" cy="21" r="3" /></g></>,
};

/* ---------- layout parts ---------- */
const IconSvg = styled.svg`
  display: block;
  flex: none;
  overflow: visible;
`;
const Icon = ({ name, size = 48 }) => (
  <IconSvg width={size} height={size} viewBox="0 0 48 48">{ICONS[name]}</IconSvg>
);

const Stage = styled.div`
  width: 2664px;
  height: 1938px;
  padding: 75px 112px 148px;
  background: #fff;
  font-family: ${FONT};
  overflow: hidden;
`;
const Window = styled.div`
  width: 2440px;
  height: 1715px;
  display: flex;
  flex-direction: column;
  background: #ececec;
  border-radius: 20px;
  overflow: hidden;
  box-shadow: 0 0 0 1px rgba(0, 0, 0, 0.18), 0 44px 80px rgba(0, 0, 0, 0.42), 0 0 70px rgba(0, 0, 0, 0.1);
`;
const TitleBar = styled.div`
  height: 57px;
  flex: none;
  display: grid;
  grid-template-columns: 1fr auto 1fr;
  align-items: center;
  padding: 0 16px;
  background: #fdfdfd;
  border-bottom: 2px solid #d8d8d8;
`;
const Lights = styled.div`
  display: flex;
  gap: 16px;
`;
const Light = styled.span`
  width: 24px;
  height: 24px;
  border-radius: 50%;
  background: ${(p) => p.$c};
  border: 1px solid rgba(0, 0, 0, 0.08);
`;
const Title = styled.div`
  font-size: 27px;
  font-weight: 600;
  color: #4a4a4a;
  letter-spacing: -0.2px;
`;
const ToolRow = styled.div`
  height: ${(p) => p.$h}px;
  flex: none;
  display: flex;
  align-items: center;
  padding-top: ${(p) => p.$pt}px;
  background: linear-gradient(#f7f7f7, #ebebeb);
  border-bottom: 3px solid #bcbcbc;
`;
const Slot = styled.div`
  flex: none;
  width: ${(p) => p.$w}px;
  margin-left: ${(p) => p.$gap}px;
  display: flex;
  align-items: center;
  justify-content: center;
`;
const PressedSlot = styled(Slot)`
  height: 62px;
  background: #dcdcdc;
  border: 3px solid #c0c0c0;
  border-radius: 6px;
`;
const Grip = styled.div`
  width: ${(p) => p.$w || 10}px;
  height: 36px;
  flex: none;
  background-image: radial-gradient(circle, #c8c8c8 1.3px, transparent 1.6px);
  background-size: 6px 7px;
`;
const VSep = styled.div`
  width: 2px;
  height: 40px;
  background: #dcdcdc;
`;
const DropArrow = styled.div`
  width: 0;
  height: 0;
  border-left: ${(p) => (p.$mini ? 5 : 8)}px solid transparent;
  border-right: ${(p) => (p.$mini ? 5 : 8)}px solid transparent;
  border-top: ${(p) => (p.$mini ? 6 : 9)}px solid #555;
  margin-top: ${(p) => (p.$mini ? 28 : 0)}px;
`;
const ComboEmpty = styled.div`
  width: 100%;
  height: 46px;
  display: flex;
  align-items: center;
  justify-content: flex-end;
  padding-right: 14px;
  border: 3px solid #d0d0d0;
  border-radius: 6px;
  background: linear-gradient(#f8f8f8, #ececec);
`;
const LightArrow = styled.span`
  width: 0;
  height: 0;
  border-left: 8px solid transparent;
  border-right: 8px solid transparent;
  border-top: 9px solid ${(p) => p.$c || "#bbb"};
`;
const Spin = styled.div`
  width: 100%;
  height: ${(p) => p.$h || 44}px;
  display: flex;
  background: #fff;
  border: 2px solid #b4b4b4;
  border-top-width: 4px;
  border-radius: 5px;
  overflow: hidden;
`;
const SpinText = styled.div`
  flex: 1;
  display: flex;
  align-items: center;
  padding-left: ${(p) => p.$pl || 8}px;
  font-size: ${(p) => p.$fs || 22}px;
  font-variant-numeric: tabular-nums;
  letter-spacing: -0.7px;
  color: ${(p) => p.$c || "#222"};
`;
const SpinBtn = styled.div`
  width: 29px;
  flex: none;
  display: flex;
  flex-direction: column;
  align-items: center;
  justify-content: center;
  gap: 6px;
  border-left: 1px solid #bbb;
  background: #f1f1f1;
`;
const Tri = styled.span`
  width: 0;
  height: 0;
  border-left: 6px solid transparent;
  border-right: 6px solid transparent;
  ${(p) => (p.$up ? "border-bottom: 9px solid #666;" : "border-top: 9px solid #666;")}
`;
const Unit = styled.div`
  width: 100%;
  height: 48px;
  display: flex;
  align-items: center;
  justify-content: space-between;
  padding: 0 16px 0 8px;
  font-size: 26px;
  color: #aaa;
  border: 2px solid #ccc;
  border-radius: 6px;
  background: linear-gradient(#f9f9f9, #eee);
`;

const Main = styled.div`
  flex: 1;
  min-height: 0;
  display: flex;
`;
const Dock = styled.div`
  width: ${(p) => p.$w}px;
  flex: none;
  display: flex;
  flex-direction: column;
  background: #ececec;
`;
const DockHead = styled.div`
  height: 48px;
  flex: none;
  display: flex;
  align-items: center;
  justify-content: space-between;
  padding: 0 4px 0 8px;
  font-size: 22px;
  color: #333;
`;
const DockBtns = styled.div`
  display: flex;
  gap: 7px;
`;
const DockBtn = styled.div`
  width: 21px;
  height: 21px;
  display: flex;
  align-items: center;
  justify-content: center;
  border: 2px solid #888;
  border-radius: 4px;
`;
const DockTools = styled.div`
  height: ${(p) => p.$h || 58}px;
  flex: none;
  display: flex;
  align-items: center;
  padding-bottom: ${(p) => p.$pb ?? 8}px;
`;
const ToolBtn = styled.div`
  flex: none;
  width: ${(p) => p.$w}px;
  margin-left: ${(p) => p.$gap}px;
  display: flex;
  align-items: center;
  justify-content: center;
  ${(p) => p.$pressed && "height: 46px; background: #dcdcdc; border: 3px solid #c2c2c2; border-radius: 6px;"}
`;
const SmallSep = styled.div`
  width: 2px;
  height: 30px;
  background: #dcdcdc;
`;
const TreeBox = styled.div`
  ${(p) => (p.$h ? `height: ${p.$h}px; flex: none;` : "flex: 1;")}
  margin-left: 1px;
  display: flex;
  background: #fff;
  border: 1px solid #c4c4c4;
  overflow: hidden;
`;
const TreeList = styled.div`
  flex: 1;
  min-width: 0;
  overflow: hidden;
`;
const TreeRow = styled.div`
  height: 36px;
  display: flex;
  align-items: center;
  padding-left: 12px;
  font-size: 25.8px;
  color: #111;
  white-space: nowrap;
`;
const ExpandSlot = styled.div`
  width: 24px;
  flex: none;
`;
const Caret = styled.div`
  width: 0;
  height: 0;
  border-top: 7px solid transparent;
  border-bottom: 7px solid transparent;
  border-left: 8px solid #555;
`;
const TreeIcon = styled.div`
  width: 38px;
  margin-right: 8px;
  flex: none;
  display: flex;
  justify-content: center;
`;
const Scroll = styled.div`
  width: 28px;
  flex: none;
  display: flex;
  flex-direction: column;
  border-left: 2px solid #d4d4d4;
  background: linear-gradient(90deg, #fff, #efefef);
`;
const ScrollBtn = styled.div`
  height: ${(p) => p.$h}px;
  flex: none;
  display: flex;
  align-items: center;
  justify-content: center;
  ${(p) => (p.$bottom ? "border-top: 2px solid #ccc;" : "border-bottom: 2px solid #ccc;")}
`;
const ScrollTrack = styled.div`
  flex: 1;
  display: flex;
  flex-direction: column;
  justify-content: flex-end;
`;
const ScrollThumb = styled.div`
  height: 82px;
  background: #e2e2e2;
  border-top: 2px solid #ccc;
`;
const SplitDots = styled.div`
  height: 10px;
  flex: none;
  display: flex;
  justify-content: center;
  align-items: center;
`;
const HDots = styled.div`
  width: 36px;
  height: 4px;
  background-image: radial-gradient(circle, #fafafa 1.5px, transparent 1.7px);
  background-size: 6px 4px;
`;
const LayerRow = styled.div`
  height: 38px;
  display: flex;
  align-items: center;
  background: #dcdcdc;
`;
const CheckBox = styled.div`
  width: 27px;
  height: 29px;
  margin-left: 47px;
  flex: none;
  display: flex;
  align-items: center;
  justify-content: center;
  background: #fff;
  border: 2px solid #c4c4c4;
`;
const Swatch = styled.div`
  width: 32px;
  height: 32px;
  margin-left: 12px;
  flex: none;
  background: #8bae99;
  border: 1px solid #7a9a88;
`;
const LayerName = styled.div`
  margin-left: 12px;
  font-size: 26.4px;
  font-weight: 700;
  color: #000;
  text-decoration: underline;
`;
const MapPane = styled.div`
  width: 1043px;
  flex: none;
  margin: 6px 15px 0 12px;
  background: #fff;
  border: 1px solid #d0d0d0;
  overflow: hidden;
`;
const MapSvg = styled.svg`
  display: block;
  width: 100%;
  height: 100%;
`;
const Table = styled.div`
  height: 1049px;
  flex: none;
  margin-left: -1px;
  display: flex;
  flex-direction: column;
  background: #fff;
  border: 1px solid #c4c4c4;
  overflow: hidden;
`;
const TableHead = styled.div`
  height: 33px;
  flex: none;
  display: flex;
  align-items: center;
  padding-top: 1px;
  background: linear-gradient(#f8f8f8, #ececec);
  border-bottom: 3px solid #bcbcbc;
  font-size: 22px;
  color: #222;
`;
const HeadCell = styled.div`
  width: ${(p) => p.$w}px;
  flex: none;
  padding-left: ${(p) => p.$pl}px;
  ${(p) => p.$line && "border-right: 2px solid #d4d4d4;"}
  height: 100%;
  display: flex;
  align-items: center;
`;
const Row = styled.div`
  height: ${(p) => p.$h || 32}px;
  flex: none;
  display: flex;
  align-items: center;
  font-size: 25.6px;
  color: #333;
  background: ${(p) => (p.$sel ? "#dcdcdc" : p.$alt ? "#f3f5f4" : "#fff")};
  white-space: nowrap;
`;
const FeatureCell = styled.div`
  width: 632px;
  flex: none;
  display: flex;
  align-items: center;
  padding-left: ${(p) => 5 + p.$level * 24.5}px;
  font-weight: ${(p) => (p.$bold ? 700 : 400)};
`;
const ValueCell = styled.div`
  flex: 1;
  font-variant-numeric: tabular-nums;
  letter-spacing: ${(p) => (p.$num ? "-0.8px" : "0")};
`;
const TwistSlot = styled.div`
  width: 25px;
  flex: none;
`;
const Twist = styled.div`
  width: 0;
  height: 0;
  border-left: 7px solid transparent;
  border-right: 7px solid transparent;
  border-top: 8px solid #666;
`;
const ModeRow = styled.div`
  flex: none;
  display: flex;
  align-items: center;
  padding-left: 9px;
  height: ${(p) => p.$h}px;
  margin-top: ${(p) => p.$mt}px;
  font-size: 25.8px;
  color: ${(p) => (p.$dim ? "#b4b4b4" : "#333")};
`;
const ModeLabel = styled.div`
  width: ${(p) => p.$w}px;
  flex: none;
`;
const Select = styled.div`
  width: ${(p) => p.$w}px;
  height: 47px;
  flex: none;
  display: flex;
  align-items: center;
  justify-content: space-between;
  padding: 0 16px 0 8px;
  background: linear-gradient(#fafafa, #ececec);
  border: 2px solid ${(p) => (p.$dim ? "#c8c8c8" : "#ababab")};
  border-radius: 6px;
  color: ${(p) => (p.$dim ? "#999" : "#111")};
`;
const StatusBar = styled.div`
  height: 62px;
  flex: none;
  display: flex;
  align-items: center;
  padding-top: 2px;
  font-size: 22px;
  color: #222;
  background: #ececec;
`;
const Locator = styled.div`
  width: 426px;
  height: 47px;
  margin-left: 8px;
  flex: none;
  display: flex;
  align-items: center;
  gap: 14px;
  padding-left: 16px;
  background: #fff;
  border: 2px solid #b4b4b4;
  border-top-width: 3px;
  border-radius: 5px;
  font-size: 25.500px;
  color: #8a8a8a;
`;
const StatusLabel = styled.div`
  flex: none;
  width: ${(p) => p.$w}px;
  margin-left: ${(p) => p.$ml}px;
  overflow: hidden;
  white-space: nowrap;
`;
const StatusWidget = styled.div`
  flex: none;
  width: ${(p) => p.$w}px;
  margin-left: ${(p) => p.$ml}px;
  display: flex;
  align-items: center;
  justify-content: center;
`;
const CheckSmall = styled(CheckBox)`
  width: 26px;
  height: 26px;
  margin-left: 0;
`;
const ComboArrow = styled.div`
  width: 41px;
  flex: none;
  display: flex;
  align-items: center;
  justify-content: center;
  border-left: 1px solid #bbb;
  background: #f1f1f1;
`;
const MagGlass = styled.svg`
  flex: none;
`;

/* ---------- data ---------- */
const A = "arrow";
const G = "grip";
const rows = [
  { h: 76, pt: 3, items: [[G, 125], ["new", 170], ["open", 235], ["save", 301], ["layout", 368], ["layoutmgr", 434], ["style", 499], [G, 554], ["hand", 599], ["pan", 664], ["zoomin", 729], ["zoomout", 795], ["zoomfull", 863], ["zoomsel", 931], ["zoomlayer", 994], ["zoom11", 1061], ["zoomlast", 1124], ["zoomnext", 1191], ["newmap", 1260], ["new3d", 1323], ["newbm", 1397], ["showbm", 1456], ["clock", 1521], ["refresh", 1588], [G, 1641], ["press:identify", 1686], ["abacus", 1751], ["gear", 1817], ["sigma", 1884], ["table", 1949], [A, 1994], ["measure", 2040], [A, 2084], ["tip", 2130], ["action", 2196], [A, 2240]] },
  { h: 78, pt: 5, items: [[G, 125], ["addlayer", 171], ["gpkg", 235], ["vertex", 301], ["feather", 368], ["chip", 434], ["virtual", 500], ["sep", 540], ["mesh", 580], ["sep", 620], [G, 647], ["pencils", 692], ["mini", 714], ["pencil", 758], ["savedim", 822], ["addfeat", 886], ["vtool", 956], [A, 999], ["editdim", 1045], ["trashdim", 1110], ["scissors", 1178], ["copydim", 1244], ["pastedim", 1310], ["undo", 1377], ["redo", 1442], [G, 1496], ["abc", 1537], ["diagram", 1604], ["sep", 1646], ["abpin", 1685], ["abcred", 1750], ["sep", 1792], ["abpindim", 1832], ["abceye", 1896], ["abcarrow", 1964], ["abcrot", 2030], ["abcpen", 2096], [G, 2150], ["binoc", 2195], [G, 2247], ["python", 2293], [G, 2346], ["help", 2389], [G, 2443]] },
  { h: 78, pt: 6, items: [[G, 125], ["ruler", 169], ["curve", 235], [A, 280], ["bmove", 326], [A, 369], ["brot", 415], ["bflip", 482], ["boffset", 549], ["bring", 613], ["bpart", 679], ["bring", 745], ["bdelring", 812], ["bdelpart", 878], ["reshape", 943], ["offcurve", 1010], ["swapv", 1076], ["snapdim", 1142], ["splitA", 1209], ["splitA", 1275], ["stitch", 1340], ["align", 1405], ["rotfeat", 1471], [A, 1516], [G, 1550], ["magnet", 1594], ["snapv", 1660], ["mini", 1682], ["snapbox", 1726], ["spin", 1857.5], ["unit", 2058.5], ["trimY", 2186], ["gshape", 2257], ["mini", 2280], ["xdim", 2324], ["x2dim", 2391], [A, 2434], ["x3dim", 2479]] },
  { h: 75, pt: 6, items: [[G, 125], ["select", 169], [A, 214], ["selattr", 261], [A, 304], ["desel", 350], [A, 393], ["selloc", 437], [G, 493], ["attrdb", 539], ["attrnew", 605], ["dbin", 669], ["dbout", 735], ["combo", 849], ["dbgear", 961], [G, 1016], ["griddim", 1060], ["gridcur", 1126], [A, 1169], ["eps", 1216], ["vdim", 1282], [A, 1326], [G, 1359], ["labelA", 1405], [A, 1447], ["cursor", 1492], ["polyadd", 1558], ["lineadd", 1627], ["staradd", 1691], ["textadd", 1759], ["sep", 1798], ["balloon", 1838], [A, 1882], [G, 1916], ["tile", 1961]] },
];
const slotWidth = (k) => ({ arrow: 16, mini: 10, grip: 12, sep: 2, spin: 195, unit: 199, combo: 156, snapbox: 62, "press:identify": 62 }[k] || 48);

const browserRows = [
  ["star", "Favorites"], ["bmbook", "Spatial Bookmarks", 1], ["home", "Home", 1], ["folder", "/ (Macintosh HD)", 1], ["folder", "/Volumes", 1],
  ["geopkg", "GeoPackage"], ["slite", "SpatiaLite"], ["pg", "PostGIS", 1], ["mssql", "MSSQL"], ["oracle", "Oracle"], ["wms", "WMS/WMTS", 1],
  ["vector", "Vector Tiles"], ["xyz", "XYZ Tiles", 1], ["wcs", "WCS"], ["wfs", "WFS / OGC API - Features", 1],
];
const identifyRows = [
  [0, "gebaeudehoehen", "", { open: 1, bold: 1 }],
  [1, "t_id", "2260", { open: 1, sel: 1 }],
  [2, "(Derived)", "", { open: 1 }],
  [3, "(clicked coordinate X)", "2611305.64", { alt: 1 }],
  [3, "(clicked coordinate Y)", "1228084.23"],
  [3, "Area (Cartesian)", "9.243 m²", { alt: 1 }],
  [3, "Area (Ellipsoidal — EPSG:7004)", "9.243 m²"],
  [3, "Closest X", "2611305.67", { alt: 1 }],
  [3, "Closest Y", "1228082.90"],
  [3, "Closest vertex X", "2611304.03", { alt: 1 }],
  [3, "Closest vertex Y", "1228082.86"],
  [3, "Closest vertex number", "4", { alt: 1 }],
  [3, "Feature ID", "0"],
  [3, "Part number", "1", { alt: 1 }],
  [3, "Parts", "1"],
  [3, "Perimeter (Cartesian)", "12.240 m", { alt: 1 }],
  [3, "Perimeter (Ellipsoidal — EPSG:7004)", "12.240 m"],
  [3, "Vertices", "5", { alt: 1 }],
  [2, "(Actions)", "", { open: 1 }],
  [3, "form", "View feature form", { alt: 1, icon: 1, h: 36 }],
  [2, "t_id", "2260"],
  [2, "hoehe", "2.269572353687416", { alt: 1 }],
];

/* places a run of tools by their centre x, relative to the start of the bar */
const withGaps = (items, origin, widthOf) => {
  let edge = origin;
  return items.map(([name, c, extra]) => {
    const w = widthOf(name);
    const gap = c - w / 2 - edge;
    edge = c + w / 2;
    return { name, w, gap, extra };
  });
};

const ToolItem = ({ name, w, gap }) => {
  if (name === "grip") return <Slot $w={w} $gap={gap}><Grip /></Slot>;
  if (name === "sep") return <Slot $w={w} $gap={gap}><VSep /></Slot>;
  if (name === "arrow") return <Slot $w={w} $gap={gap}><DropArrow /></Slot>;
  if (name === "mini") return <Slot $w={w} $gap={gap}><DropArrow $mini /></Slot>;
  if (name === "press:identify") return <PressedSlot $w={w} $gap={gap}><Icon name="identify" /></PressedSlot>;
  if (name === "snapbox") {
    return (
      <PressedSlot $w={w} $gap={gap}>
        <Icon name="snapbox" />
      </PressedSlot>
    );
  }
  if (name === "combo") return <Slot $w={w} $gap={gap}><ComboEmpty><LightArrow /></ComboEmpty></Slot>;
  if (name === "spin") {
    return (
      <Slot $w={w} $gap={gap}>
        <Spin>
          <SpinText $c="#aaa" $pl={6} $fs={26}>12</SpinText>
          <SpinBtn><Tri $up /><Tri /></SpinBtn>
        </Spin>
      </Slot>
    );
  }
  if (name === "unit") return <Slot $w={w} $gap={gap}><Unit>px<LightArrow /></Unit></Slot>;
  return <Slot $w={w} $gap={gap}><Icon name={name} /></Slot>;
};

const DockTitleBar = ({ title }) => (
  <DockHead>
    {title}
    <DockBtns>
      <DockBtn>
        <svg width="15" height="15" viewBox="0 0 15 15"><path d="M4 4V1H14V11H11M1 4H11V14H1Z" fill="none" stroke="#777" strokeWidth="2" /></svg>
      </DockBtn>
      <DockBtn>
        <svg width="13" height="13" viewBox="0 0 13 13"><path d="M1 1L12 12M12 1L1 12" stroke="#555" strokeWidth="3" /></svg>
      </DockBtn>
    </DockBtns>
  </DockHead>
);

const dockTool = (items, origin, size = 32) => {
  const widthOf = (k) => (k === "arrow" ? 16 : k === "sep" ? 2 : k.startsWith("press:") ? 48 : size + 2);
  return withGaps(items, origin, widthOf).map(({ name, w, gap }, i) => {
    if (name === "arrow") return <ToolBtn key={i} $w={w} $gap={gap}><DropArrow /></ToolBtn>;
    if (name === "sep") return <ToolBtn key={i} $w={w} $gap={gap}><SmallSep /></ToolBtn>;
    if (name.startsWith("press:")) return <ToolBtn key={i} $w={w} $gap={gap} $pressed><Icon name={name.slice(6)} size={size} /></ToolBtn>;
    return <ToolBtn key={i} $w={w} $gap={gap}><Icon name={name} size={size} /></ToolBtn>;
  });
};

const CheckMark = ({ w = 20, h = 22 }) => (
  <svg width={w} height={h} viewBox="0 0 20 22">
    <path d="M3 12L8 19L17 2" fill="none" stroke="#111" strokeWidth="3" />
  </svg>
);

export default function App() {
  return (
    <Stage>
      <GlobalStyle />
      <Window>
        <TitleBar>
          <Lights>
            <Light $c="#ec6a5e" />
            <Light $c="#f4bf4f" />
            <Light $c="#61c554" />
          </Lights>
          <Title>*Untitled Project — QGIS</Title>
        </TitleBar>

        {rows.map((row, r) => (
          <ToolRow key={r} $h={row.h} $pt={row.pt}>
            {withGaps(row.items, 112, slotWidth).map((it, i) => (
              <ToolItem key={i} {...it} />
            ))}
          </ToolRow>
        ))}

        <Main>
          <Dock $w={468}>
            <DockTitleBar title="Browser" />
            <DockTools>
              {dockTool([["newgroup", 142], ["refreshb", 194], ["filter", 244], ["collapse", 295], ["info", 344]], 112)}
            </DockTools>
            <TreeBox $h={519}>
              <TreeList>
                {browserRows.map(([icon, label, caret]) => (
                  <TreeRow key={label}>
                    <ExpandSlot>{caret && <Caret />}</ExpandSlot>
                    <TreeIcon><Icon name={icon} size={33} /></TreeIcon>
                    {label}
                  </TreeRow>
                ))}
              </TreeList>
              <Scroll>
                <ScrollBtn $h={27}><Tri $up /></ScrollBtn>
                <ScrollTrack><ScrollThumb /></ScrollTrack>
                <ScrollBtn $h={28} $bottom><Tri /></ScrollBtn>
              </Scroll>
            </TreeBox>
            <SplitDots><HDots /></SplitDots>
            <DockTitleBar title="Layers" />
            <DockTools $h={56} $pb={5}>
              {dockTool([["brush", 143], ["addgroup", 194], ["eye", 244], ["filterd", 294], ["exprfilter", 346], ["arrow", 380], ["expand", 419], ["collapse", 469], ["rmgroup", 518]], 112)}
            </DockTools>
            <TreeBox>
              <TreeList>
                <LayerRow>
                  <CheckBox><CheckMark /></CheckBox>
                  <Swatch />
                  <LayerName>gebaeudehoehen</LayerName>
                </LayerRow>
              </TreeList>
            </TreeBox>
          </Dock>

          <MapPane>
            <MapSvg viewBox="0 0 1041 1281">
              <polygon points="401,382 889,373 895,761 407,772" fill="#b84e37" stroke="#ff0000" strokeWidth="7" strokeLinejoin="round" />
            </MapSvg>
          </MapPane>

          <Dock $w={902}>
            <DockTitleBar title="Identify Results" />
            <DockTools>
              {dockTool([["form", 1679], ["sep", 1713], ["expand", 1745], ["collapse", 1795], ["press:autofeat", 1844], ["sep", 1877], ["deselsm", 1911], ["sep", 1941], ["copydoc", 1972], ["print", 2022], ["sep", 2054], ["idsel", 2086], ["arrow", 2122], ["wrench", 2162], ["sep", 2193], ["help", 2224]], 1650)}
            </DockTools>
            <Table>
              <TableHead>
                <HeadCell $w={625} $pl={6} $line>Feature</HeadCell>
                <HeadCell $w={270} $pl={8}>Value</HeadCell>
              </TableHead>
              {identifyRows.map(([level, label, value, o = {}], i) => (
                <Row key={i} $alt={o.alt} $sel={o.sel} $h={o.h}>
                  <FeatureCell $level={level} $bold={o.bold}>
                    <TwistSlot>{o.open && <Twist />}</TwistSlot>
                    {o.icon ? <Icon name="form" size={28} /> : label}
                  </FeatureCell>
                  <ValueCell $num={/\d/.test(value)}>{value}</ValueCell>
                </Row>
              ))}
            </Table>
            <ModeRow $h={47} $mt={13}>
              <ModeLabel $w={80}>Mode</ModeLabel>
              <Select $w={805}>Current Layer<LightArrow $c="#555" /></Select>
            </ModeRow>
            <ModeRow $h={47} $mt={15} $dim>
              <ModeLabel $w={72}>View</ModeLabel>
              <Select $w={158} $dim>Tree<LightArrow $c="#bbb" /></Select>
            </ModeRow>
          </Dock>
        </Main>

        <StatusBar>
          <Locator>
            <MagGlass width="26" height="30" viewBox="0 0 26 30">
              <circle cx="11" cy="12" r="9" fill="none" stroke="#888" strokeWidth="2.4" />
              <path d="M17 19L24 28" stroke="#888" strokeWidth="2.6" />
            </MagGlass>
            Type to locate (⌘K)
          </Locator>
          <StatusLabel $w={121} $ml={18}>Identifying (</StatusLabel>
          <StatusLabel $w={113} $ml={18}>Coordinate</StatusLabel>
          <StatusWidget $w={295} $ml={9}><Spin><SpinText $pl={14}>2611308.41,1228084.40</SpinText></Spin></StatusWidget>
          <StatusWidget $w={30} $ml={10}><Icon name="mouse" size={34} /></StatusWidget>
          <StatusLabel $w={57} $ml={26}>Scale</StatusLabel>
          <StatusWidget $w={185} $ml={8}>
            <Spin $h={47}><SpinText $pl={6}>1:79</SpinText><ComboArrow><LightArrow $c="#555" /></ComboArrow></Spin>
          </StatusWidget>
          <StatusWidget $w={25} $ml={24}><Icon name="lock" size={30} /></StatusWidget>
          <StatusLabel $w={98} $ml={18}>Magnifier</StatusLabel>
          <StatusWidget $w={181} $ml={8}>
            <Spin><SpinText $pl={8}>100%</SpinText><SpinBtn><Tri $up /><Tri /></SpinBtn></Spin>
          </StatusWidget>
          <StatusLabel $w={88} $ml={19}>Rotation</StatusLabel>
          <StatusWidget $w={185} $ml={18}>
            <Spin><SpinText $pl={8}>0.0 °</SpinText><SpinBtn><Tri $up /><Tri /></SpinBtn></Spin>
          </StatusWidget>
          <StatusWidget $w={26} $ml={13}><CheckSmall><CheckMark w={16} h={20} /></CheckSmall></StatusWidget>
          <StatusLabel $w={73} $ml={11}>Render</StatusLabel>
          <StatusWidget $w={30} $ml={34}><Icon name="crs" size={30} /></StatusWidget>
          <StatusLabel $w={122} $ml={5}>EPSG:2056</StatusLabel>
          <StatusWidget $w={34} $ml={45}><Icon name="chat" size={34} /></StatusWidget>
        </StatusBar>
      </Window>
    </Stage>
  );
}
